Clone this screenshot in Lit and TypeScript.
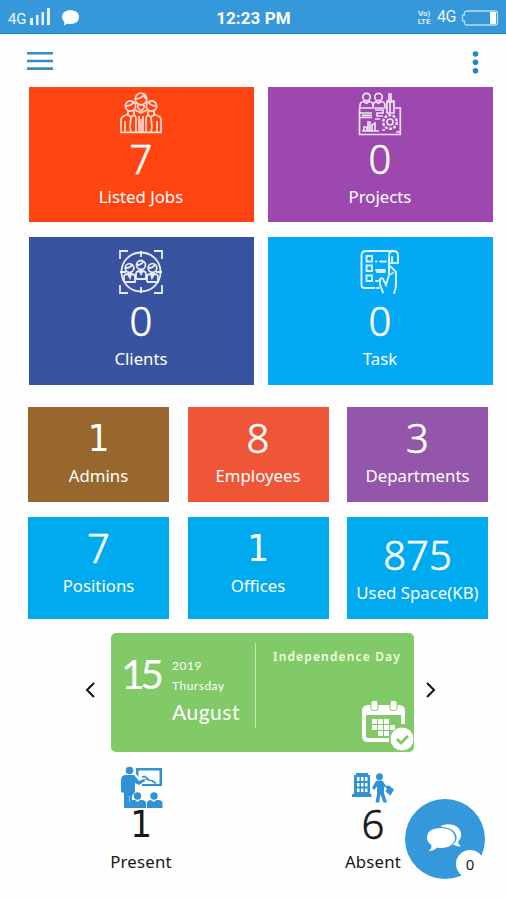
import { LitElement, html, css, TemplateResult } from "lit";
import { customElement, property } from "lit/decorators.js";
import { classMap } from "lit/directives/class-map.js";

const jobsIcon = html`<svg width="44" height="42" viewBox="0 0 44 42" fill="none" stroke="#fff" stroke-opacity=".8" stroke-width="1.7">
  <circle cx="22" cy="7" r="5.8"/><path d="M16 7q6 0 9-4 1 4 3 4M19 13v3l3 3 3-3v-3"/>
  <circle cx="11.5" cy="14" r="5.2"/><path d="M6.5 14q6 0 8-4M9 19v4l3 2 3-2v-4"/>
  <circle cx="32.5" cy="14" r="5.2"/><path d="M37.5 14q-6 0-8-4M29 19v4l3 2 3-2v-4"/>
  <path d="M2 40V28q0-3 3-4l4-2M42 40V28q0-3-3-4l-4-2M1 40.300h42M6 29v11M38 29v11M12 25l-1 10 1 5M32 25l1 10-1 5M15 23q2 1 2 4v13M29 23q-2 1-2 4v13M20 24v16M24 24v16M22 27v13M16 18l6 3 6-3"/>
</svg>`;

const projectsIcon = html`<svg width="44" height="44" viewBox="0 0 44 44" fill="none" stroke="#fff" stroke-opacity=".85" stroke-width="1.7">
  <circle cx="8.500" cy="5" r="3.7"/><path d="M2 15v-2q0-3 4-3.500l2.500 2 2.500-2q4 .5 4 3.500v2"/>
  <circle cx="20.500" cy="5" r="3.700"/><path d="M15 13q1-3 3-3.500l2.500 2 2.500-2q4 .5 4 3.500v2"/>
  <path d="M31 2h2v7h3v12h-7V9h2zM29 10h7M32 10v11M28 16H1.500v26.500h40.800V16H37M2 21h12M2 25.500h12M4 23.300h10M17 18h8v3h-6v3h6M17 27h5M4 39h17M6 39v-4h3v4M10 39v-9h2v9M14 39v-6l3-2v8M24 38h3M38 40h4"/>
  <circle cx="32" cy="30" r="6.800" stroke-dasharray="3 1.300" stroke-width="2.400"/><circle cx="32" cy="30" r="3"/>
</svg>`;

const clientsIcon = html`<svg width="44" height="44" viewBox="0 0 44 44" fill="none" stroke="#fff" stroke-opacity=".88" stroke-width="1.800">
  <path d="M1 9V1h8M35 1h8v8M43 35v8h-8M9 43H1v-8M22 1v6M22 37v6M1 22h6M37 22h6"/>
  <circle cx="22" cy="22" r="19.500"/>
  <circle cx="22" cy="15" r="4.500"/><path d="M18 15q4 0 6-3M17 29v-5q0-3 4-3h2q4 0 4 3v5M20 20l2 4 2-4"/>
  <circle cx="10.500" cy="18" r="4.300"/><path d="M7 18q4 0 6-3M5 32v-5q0-3 4-3h3q4 0 4 3v5H5M9 24l2 4 1-4"/>
  <circle cx="33.500" cy="18" r="4.300"/><path d="M30 18q4 0 6-3M28 32v-5q0-3 4-3h3q4 0 4 3v5H28M32 24l1 4 2-4M17 29h10"/>
</svg>`;

const taskIcon = html`<svg width="40" height="44" viewBox="0 0 40 44" fill="none" stroke="#fff" stroke-opacity=".85" stroke-width="1.900" stroke-linecap="round">
  <path d="M33 1H6Q1.500 1 1.500 6v29q0 3 3 3h10M17 38h2"/>
  <path d="M29 20V5.500Q29 1 33.500 1T38 5.500V13h-8M32 13V7"/>
  <path d="M6.500 6h5.500v5.500H6.500zM6.500 15.500h5.500V21H6.500zM6.500 25.500h5.500V31H6.500z"/>
  <path d="M16 11.500h.5M20 11.500h6M16 20h9M17 22h8M16 31h2M29 17v8l-3 10-3-6q-2-2-3 .5v5l3 8M30 16l6 6v12q0 5-2 9M29 25l4-2"/>
</svg>`;

const presentIcon = html`<svg class="blue" width="43" height="43" viewBox="0 0 43 43">
  <circle cx="9.500" cy="4.500" r="3.800"/>
  <path d="M1 14q0-5 5-5h8l5 6 5-2 1 2-6 4-4-2v9l-3 4v12H9.500V30H9v12H4V27l-3-1z"/>
  <path d="M16 8V2h26v18H22v-2h17.500V4.500h-21V11z"/>
  <path d="m22 11 3-.5 4 4 3 0 4 3" fill="none" stroke="currentColor" stroke-width="1.700"/><path d="m23 15 6-3" fill="none" stroke="currentColor"/>
  <circle cx="17.500" cy="30" r="3.700"/><circle cx="34" cy="30" r="3.700"/>
  <path d="M9 42v-4q0-4 4-4h2l2.500 2 2.500-2h2q4 0 4 4v4zM26.800 42v-5q1-3 4-3l3.200 2 2.500-2h2q4 0 4 4v4z"/>
</svg>`;

const absentIcon = html`<svg class="blue" width="42" height="30" viewBox="0 0 42 30">
  <path fill-rule="evenodd" d="M4 0h12v2h2v19h1.500v3H0v-3h2V2h2zM5 4v4h2.500V4zm4 0v4h2.500V4zm4 0v4h2.500V4zM5 10v3.500h2.500V10zm4 0v3.500h2.500V10zm4 0v3.500h2.500V10zM5 15.500V19h2.500v-3.500zm4 0V19h2.500v-3.500zm4 0V19h2.500v-3.500z"/>
  <circle cx="27.500" cy="3.700" r="3.500"/>
  <path d="m24 8-4 7 2 2 3-3.500v8l-1.500 8h3.500l1.500-8 3 8H35l-3-9.500v-6.500l3 2-1.500 3 5 4 3.500-6-5-4-3 .5-3-4.500q-1-1-2.500-1z"/>
</svg>`;

const calendarIcon = html`<svg width="52" height="50" viewBox="0 0 52 50">
  <path fill="none" stroke="#fff" stroke-width="4" d="M41 23V10q0-4-4-4H6q-4 0-4 4v25q0 4 4 4h21"/>
  <path fill="#fff" d="M2 6h40v8H2z"/>
  <g fill="#fff" stroke="#82ca68" stroke-width="1"><rect x="9" y="-.5" width="7" height="10" rx="2.500"/><rect x="28" y="-.5" width="7" height="10" rx="2.500"/></g>
  <g fill="#fff"><path d="M10 18h5v5h-5zM16 18h5v5h-5zM22 18h5v5h-5zM10 24h5v5h-5zM16 24h5v5h-5zM22 24h5v5h-5zM28 24h5v5h-5zM16 30h5v5h-5zM22 30h5v5h-5z"/>
  <circle cx="40" cy="38" r="12" stroke="#82ca68" stroke-width="1"/></g>
  <path d="m35 38 4 4 7-7" fill="none" stroke="#82ca68" stroke-width="2.800"/>
</svg>`;

@customElement("count-tile")
class CountTile extends LitElement {
  @property() value = "";
  @property() label = "";
  @property({ attribute: false }) icon?: TemplateResult;
  static styles = css`
    :host { display: flex; flex-direction: column; align-items: center; font-family: "Noto Sans", sans-serif; color: inherit; box-sizing: border-box; }
    svg { display: block; }
    .blue { fill: currentColor; color: #2e92d5; }
    .value { font-size: 40px; line-height: 36px; font-weight: 300; height: 36px; -webkit-text-stroke: .6px currentColor; }
    .one { font-family: "DejaVu Sans Condensed", "DejaVu Sans", sans-serif; font-stretch: condensed; font-size: 38px; -webkit-text-stroke: 0; }
    .label { margin-top: 8px; font-size: 16.800px; line-height: 24px; white-space: nowrap; letter-spacing: var(--track, 0); }
    .icon { height: var(--icon-h, auto); }
  `;
  render() {
    return html`${this.icon ? html`<div class="icon">${this.icon}</div>` : ""}
      <div class=${classMap({ value: true, one: this.value === "1" })}>${this.value}</div>
      <div class="label">${this.label}</div>`;
  }
}

@customElement("app-root")
class AppRoot extends LitElement {
  static styles = css`
    :host { display: block; position: relative; width: 506px; height: 900px; overflow: hidden; background: #fefefe; font-family: "Noto Sans", sans-serif; color: #fff; }
    svg { display: block; }
    .status { height: 34px; box-sizing: border-box; background: #3498db; border-bottom: 1px solid #1683c5; display: grid; grid-template-columns: 1fr auto 1fr; align-items: center; padding: 2px 7px 0 8px; font-family: Roboto, sans-serif; }
    .side { display: flex; align-items: center; }
    .right { justify-content: flex-end; }
    .net { font-size: 15px; letter-spacing: -.1px; opacity: .92; padding-top: 3px; }
    .right .net { padding: 0 5px 3px 5px; font-size: 16px; letter-spacing: -.5px; }
    .bars { margin: -2px 0 0 4px; }
    .bubble { margin-left: 12px; }
    .clock { font-size: 17px; font-weight: 700; letter-spacing: .1px; }
    .volte { width: 16px; font-size: 8px; line-height: 8px; font-weight: 700; text-align: center; opacity: .85; }
    .bar { height: 53px; box-sizing: border-box; padding: 17px 26px 0 27px; display: flex; justify-content: space-between; }
    .dots { margin: -1px 0 0; }
    .main { margin-left: 28.500px; display: grid; grid-template-columns: 225px 225px; grid-template-rows: 135px 148px; gap: 15px 14px; }
    .main count-tile { --icon-h: 49px; padding-top: 5px; }
    .main .low { padding-top: 13px; --icon-h: 53px; }
    .small { margin: 22px 0 0 28px; display: grid; grid-template-columns: repeat(3, 141px); grid-template-rows: 95px 102px; gap: 15px 18.500px; }
    .small count-tile { padding-top: 13px; }
    .small .space { padding-top: 20px; }
    .orange { background: #ff4612; } .violet { background: #9d48af; } .navy { background: #38539f; } .sky { background: #03a9f4; }
    .brown { background: #98672d; } .coral { background: #ef5638; } .purple { background: #9456aa; } .cyan { background: #00aaee; }
    .event-row { display: flex; align-items: center; margin: 14px 0 0 83px; gap: 16px; }
    .arrow { margin-bottom: 6px; }
    .next { margin-left: -5px; }
    .event { width: 303px; height: 119px; border-radius: 5px; background: #82ca68; display: flex; box-sizing: border-box; font-family: Lato, sans-serif; }
    .day { width: 51px; padding: 18px 0 0 10px; font-size: 41px; line-height: 46px; letter-spacing: -4.500px; }
    .date { width: 83px; padding-top: 25px; font-size: 12px; line-height: 16px; letter-spacing: .5px; }
    .date div + div { margin-top: 4px; }
    .date .month { font-size: 21px; line-height: 28px; margin-top: 4px; white-space: nowrap; }
    .rule { width: 1px; height: 85px; margin: 10px 0 0; background: #c5e7b6; }
    .holiday { width: 158px; display: flex; flex-direction: column; align-items: flex-end; justify-content: space-between; }
    .title { padding: 15px 13px 0 0; font-weight: 600; font-family: "Noto Sans", sans-serif; font-size: 12px; line-height: 18px; letter-spacing: 1.150px; white-space: nowrap; color: #f1ffdf; }
    .cal { margin-bottom: 1px; }
    .people { display: flex; margin: 14px 0 0 81px; color: #171717; }
    .people count-tile { width: 120px; --icon-h: 40px; --track: .2px; }
    .people .away { margin-left: 112px; padding-top: 7px; --icon-h: 33px; }
    .chat { position: absolute; left: 405px; top: 799px; width: 80px; height: 80px; border-radius: 50%; background: #3498db; display: flex; align-items: center; justify-content: center; }
    .count { position: absolute; left: 51px; top: 51px; width: 28px; height: 28px; border-radius: 50%; background: #fefefe; color: #222; font: 15px/28px "Noto Sans", sans-serif; text-align: center; }
  `;
  render() {
    return html`
      <div class="status">
        <div class="side"><span class="net">4G</span>
          <svg class="bars" width="20" height="17" viewBox="0 0 20 17" fill="#fff" opacity=".88"><path d="M0 10h3v7H0zM6 7h2.500v10H6zM11.500 4H14v13h-2.500zM17 0h3v17h-3z"/></svg>
          <svg class="bubble" width="17" height="16" viewBox="0 0 17 16" fill="#fff"><path d="M8.500 0Q17 .5 17 7t-8.500 7q-2 0-3-.5L2 15.500 2.500 12Q0 10 0 7 0 .5 8.500 0"/></svg>
        </div>
        <div class="clock">12:23 PM</div>
        <div class="side right"><div class="volte">Vo)<br />LTE</div><span class="net">4G</span>
          <svg width="38" height="16" viewBox="0 0 38 16"><path d="M6 1h28q2.500 0 2.500 2.500v9q0 2.500-2.500 2.500H6q-2.500 0-2.500-2.500V11H1.500V5h2V3.500Q3.500 1 6 1z" fill="none" stroke="#b8dbea" stroke-width="1.300"/><path d="M29 2h6v12h-6z" fill="#fff"/></svg>
        </div>
      </div>
      <div class="bar">
        <svg width="26" height="20" viewBox="0 0 26 20" fill="#358fc2"><path d="M0 1h26v2.600H0zM0 8.700h26v2.600H0zM0 16.300h26v2.600H0z"/></svg>
        <svg class="dots" width="9" height="24" viewBox="0 0 9 24" fill="#2486bd"><circle cx="4.500" cy="4" r="2.800"/><circle cx="4.500" cy="12.300" r="2.800"/><circle cx="4.500" cy="20.700" r="2.800"/></svg>
      </div>
      <div class="main">
        <count-tile class="orange" value="7" label="Listed Jobs" .icon=${jobsIcon}></count-tile>
        <count-tile class="violet" value="0" label="Projects" .icon=${projectsIcon}></count-tile>
        <count-tile class="navy low" value="0" label="Clients" .icon=${clientsIcon}></count-tile>
        <count-tile class="sky low" value="0" label="Task" .icon=${taskIcon}></count-tile>
      </div>
      <div class="small">
        <count-tile class="brown" value="1" label="Admins"></count-tile>
        <count-tile class="coral" value="8" label="Employees"></count-tile>
        <count-tile class="purple" value="3" label="Departments"></count-tile>
        <count-tile class="cyan" value="7" label="Positions"></count-tile>
        <count-tile class="cyan" value="1" label="Offices"></count-tile>
        <count-tile class="cyan space" value="875" label="Used Space(KB)"></count-tile>
      </div>
      <div class="event-row">
        <svg class="arrow" width="12" height="16" viewBox="0 0 12 16" fill="none" stroke="#111" stroke-width="2"><path d="M11 1 4 8l7 7"/></svg>
        <div class="event">
          <div class="day">15</div>
          <div class="date"><div>2019</div><div>Thursday</div><div class="month">August</div></div>
          <div class="rule"></div>
          <div class="holiday"><div class="title">Independence Day</div><div class="cal">${calendarIcon}</div></div>
        </div>
        <svg class="arrow next" width="12" height="16" viewBox="0 0 12 16" fill="none" stroke="#111" stroke-width="2"><path d="m2 1 7 7-7 7"/></svg>
      </div>
      <div class="people">
        <count-tile value="1" label="Present" .icon=${presentIcon}></count-tile>
        <count-tile class="away" value="6" label="Absent" .icon=${absentIcon}></count-tile>
      </div>
      <div class="chat">
        <svg width="36" height="30" viewBox="0 0 36 30" fill="#fff"><path d="M14 4c8 0 14 4 14 10s-6 10-14 10q-2 0-4-.6-3 3.400-8 3.600 3-3 2.500-6Q0 18 0 14 0 4 14 4z"/><path d="M13 2.500Q18-.5 24 .5c7 1 11 6 10 12q-.5 3-3 5 0 3 3 5-4 .5-8-2 4-3 3.500-8Q28 4 13 2.500z"/></svg>
        <div class="count">0</div>
      </div>`;
  }
}
